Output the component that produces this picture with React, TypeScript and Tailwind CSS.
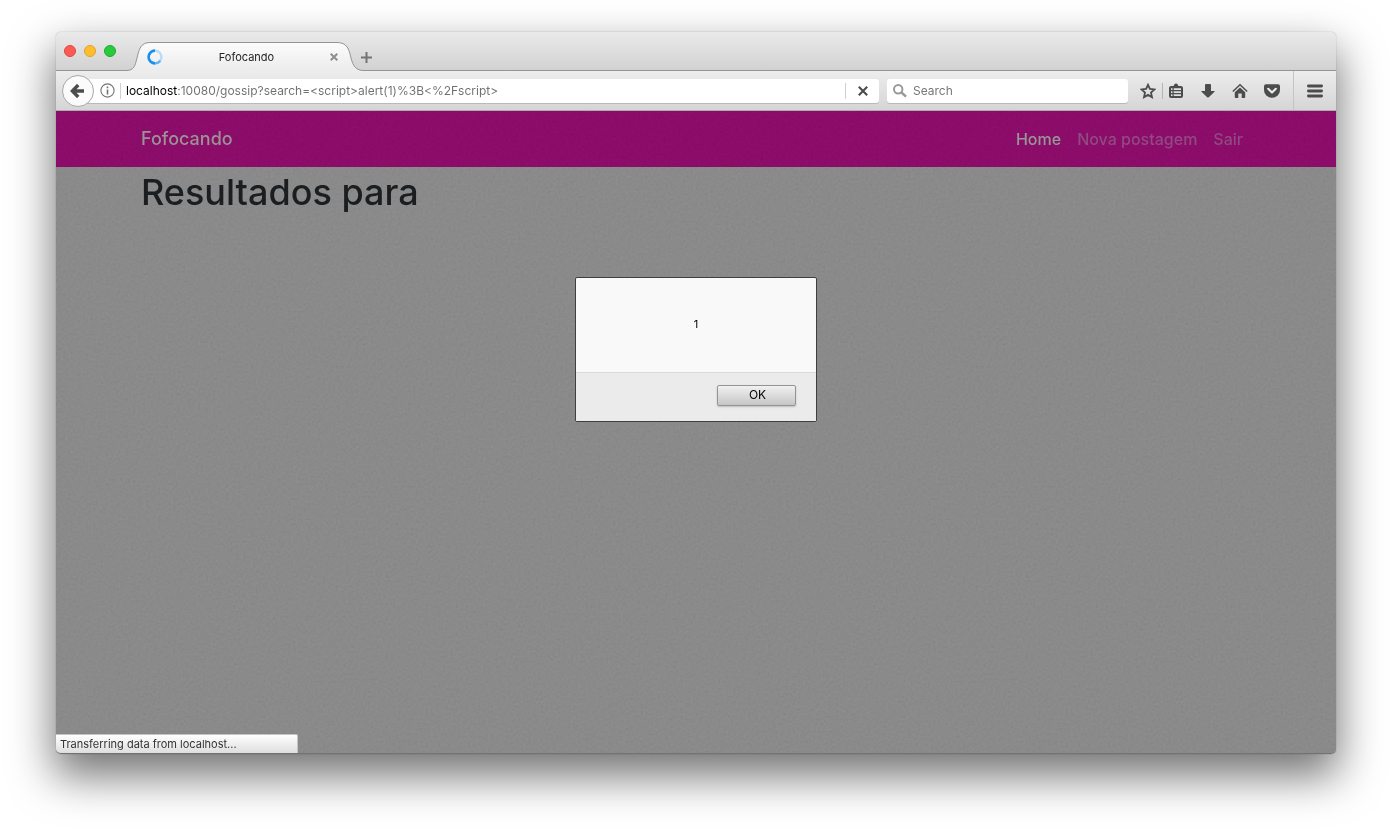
import React from "react";

const iconButton = "flex h-8 w-8 shrink-0 items-center justify-center text-[#4c4c4c]";

function Spinner() {
  return (
    <svg width="16" height="16" viewBox="0 0 16 16" fill="none" aria-hidden="true">
      <circle cx="8" cy="8" r="6.4" stroke="#b9dbf8" strokeWidth="2.4" />
      <path d="M8 14.4A6.4 6.4 0 0 0 13.2 11.6" stroke="#62b1f3" strokeWidth="2.4" />
      <path d="M8 1.6A6.4 6.4 0 0 0 8 14.4" stroke="#1a90ee" strokeWidth="2.6" />
    </svg>
  );
}

function TabStrip() {
  return (
    <header className="flex h-[39px] items-end rounded-t-[5px] border-b border-[#949494] bg-linear-to-b from-[#eaeaea] to-[#d2d2d2] pl-2">
      <div className="flex h-[38px] items-center gap-2">
        <button aria-label="Close window" className="h-3 w-3 rounded-full border border-[#e2463f] bg-[#fc5b53]" />
        <button aria-label="Minimize window" className="h-3 w-3 rounded-full border border-[#e1a325] bg-[#fdbd2f]" />
        <button aria-label="Zoom window" className="h-3 w-3 rounded-full border border-[#1dab2c] bg-[#28cb3e]" />
      </div>
      <div className="relative -mb-px ml-2.5 flex h-[29px] w-[238px] items-center pr-[22px] pl-[21px]">
        <svg className="absolute inset-0" width="238" height="29" viewBox="0 0 238 29" aria-hidden="true">
          <defs>
            <linearGradient id="tab" x1="0" y1="0" x2="0" y2="1">
              <stop offset="0" stopColor="#fcfcfc" />
              <stop offset="1" stopColor="#ebebeb" />
            </linearGradient>
          </defs>
          <path
            d="M0 28.5C8 28.5 9 24 11 16C13 7 15 0.5 24 0.5H211C221 0.5 223 7 225 16C227 24 230 28.5 238 28.5V30H0Z"
            fill="url(#tab)"
          />
          <path
            d="M0 28.5C8 28.5 9 24 11 16C13 7 15 0.5 24 0.5H211C221 0.5 223 7 225 16C227 24 230 28.5 238 28.5"
            fill="none"
            stroke="#949494"
          />
        </svg>
        <div className="relative flex flex-1 items-center">
          <Spinner />
          <span className="flex-1 pl-1 text-center text-[11px] leading-4 text-[#222]">Fofocando</span>
          <button aria-label="Close tab" className="flex h-4 w-4 items-center justify-center">
            <svg width="8" height="8" viewBox="0 0 8 8" stroke="#8f8f8f" strokeWidth="2" aria-hidden="true">
              <path d="M0.7 0.7L7.3 7.3M7.3 0.7L0.7 7.3" />
            </svg>
          </button>
        </div>
      </div>
      <button aria-label="New tab" className="-ml-1 flex h-[25px] w-3 items-center justify-center">
        <svg width="11" height="11" viewBox="0 0 11 11" stroke="#747474" strokeWidth="2" aria-hidden="true">
          <path d="M5.5 0V11M0 5.5H11" />
        </svg>
      </button>
    </header>
  );
}

function Toolbar() {
  return (
    <div className="flex h-10 items-center border-b border-[#aeaeae] bg-linear-to-b from-[#ededed] to-[#d5d5d5] pl-1.5">
      <button
        aria-label="Back"
        className="z-10 flex h-8 w-8 shrink-0 items-center justify-center rounded-full border border-[#a8a8a8] bg-[#fbfbfb] pr-0.5"
      >
        <svg width="14" height="14" viewBox="0 0 14 14" fill="none" stroke="#4c4c4c" strokeWidth="3.4" aria-hidden="true">
          <path d="M8.2 1L2.4 7L8.2 13M2.6 7H14" />
        </svg>
      </button>
      <div className="-ml-2 flex h-6 flex-1 items-center rounded-r-[3px] bg-white pl-[13px] shadow-[0_1px_0_#b9b9b9]">
        <button aria-label="Site information" className="flex h-4 w-4 shrink-0 items-center justify-center">
          <svg width="15" height="15" viewBox="0 0 15 15" fill="none" stroke="#737373" aria-hidden="true">
            <circle cx="7.5" cy="7.5" r="6.6" strokeWidth="1.1" />
            <path d="M7.5 6.4V11.4M7.5 3.6V5.2" strokeWidth="1.6" />
          </svg>
        </button>
        <div className="ml-[5px] flex min-w-0 flex-1 border-x border-[#d0d0d0] pl-[5px]">
          <input
            aria-label="Address"
            readOnly
            value="localhost:10080/gossip?search=<script>alert(1)%3B<%2Fscript>"
            className="h-4 min-w-0 flex-1 bg-[linear-gradient(to_right,#000_52px,#6f6f6f_52px)] bg-clip-text text-[12px] leading-4 text-transparent outline-none"
          />
        </div>
        <button aria-label="Stop loading" className="flex h-6 w-[33px] items-center justify-center">
          <svg width="10" height="10" viewBox="0 0 10 10" stroke="#4c4c4c" strokeWidth="2.1" aria-hidden="true">
            <path d="M0.8 0.8L9.2 9.2M9.2 0.8L0.8 9.2" />
          </svg>
        </button>
      </div>
      <label className="ml-2 flex h-6 w-[241px] items-center gap-[6px] rounded-[3px] bg-white pl-1.5 shadow-[0_1px_0_#b9b9b9]">
        <svg width="14" height="14" viewBox="0 0 14 14" fill="none" stroke="#999" aria-hidden="true">
          <circle cx="5.2" cy="5.2" r="4.2" strokeWidth="2" />
          <path d="M8.4 8.4L13 12.6" strokeWidth="2.6" />
        </svg>
        <input
          aria-label="Search"
          placeholder="Search"
          className="h-4 min-w-0 flex-1 text-[12px] leading-4 outline-none placeholder:text-[#777]"
        />
      </label>
      <div className="ml-1 flex items-center">
        <button aria-label="Bookmark this page" className={iconButton}>
          <svg width="16" height="16" viewBox="0 0 16 16" fill="none" stroke="currentColor" strokeWidth="1.8" strokeLinejoin="miter" aria-hidden="true">
            <path d="M8 1.8L9.9 5.9L14.4 6.4L11 9.6L12 14.2L8 11.9L4 14.2L5 9.6L1.6 6.4L6.1 5.9Z" />
          </svg>
        </button>
        <div className="-ml-0.5 h-4 w-px bg-[#b4b4b4]" />
        <button aria-label="Show bookmarks" className="-ml-[3px] flex h-8 w-8 items-center justify-center text-[#4c4c4c]">
          <svg width="16" height="16" viewBox="0 0 16 16" fill="currentColor" aria-hidden="true">
            <path
              fillRule="evenodd"
              d="M3 3H5.5L6.4 1.2Q8 0 9.6 1.2L10.5 3H13Q15 3 15 5V13Q15 15 13 15H3Q1 15 1 13V5Q1 3 3 3ZM3 5.2V7H4.5V5.2ZM5.7 5.2V7H13V5.2ZM3 8.2V10H4.5V8.2ZM5.7 8.2V10H13V8.2ZM3 11.2V13H4.5V11.2ZM5.7 11.2V13H13V11.2Z"
            />
          </svg>
        </button>
        <button aria-label="Downloads" className={iconButton}>
          <svg width="16" height="16" viewBox="0 0 16 16" fill="currentColor" aria-hidden="true">
            <path d="M5 2Q5 1 6 1H10Q11 1 11 2V8H14.2Q15.2 8 14.5 8.8L8.8 14.2Q8 15 7.2 14.2L1.5 8.8Q0.8 8 1.8 8H5Z" />
          </svg>
        </button>
        <button aria-label="Home page" className={iconButton}>
          <svg width="16" height="16" viewBox="0 0 16 16" aria-hidden="true">
            <path d="M0.8 8.5L8 1.7L15.2 8.5" fill="none" stroke="currentColor" strokeWidth="1.4" />
            <path d="M8 4.4L13.2 9.3V14.2Q13.2 15 12.4 15H9.7V10.4H6.3V15H3.6Q2.8 15 2.8 14.2V9.3Z" fill="currentColor" />
          </svg>
        </button>
        <button aria-label="Save to Pocket" className={iconButton}>
          <svg width="16" height="16" viewBox="0 0 16 16" aria-hidden="true">
            <path d="M2 1.2H14Q16 1.2 16 3.2V7A8 7.8 0 0 1 0 7V3.2Q0 1.2 2 1.2Z" fill="currentColor" />
            <path d="M4.2 5.8L8 9.5L11.8 5.8" fill="none" stroke="#eee" strokeWidth="2.1" strokeLinecap="round" strokeLinejoin="round" />
          </svg>
        </button>
      </div>
      <div className="ml-[5px] flex h-full w-[43px] items-center justify-center border-l border-[#c4c4c4]">
        <button aria-label="Open menu" className={iconButton}>
          <svg width="16" height="14" viewBox="0 0 16 14" fill="currentColor" aria-hidden="true">
            <rect width="16" height="3" rx="1.4" y="0.5" />
            <rect width="16" height="3" rx="1.4" y="5.5" />
            <rect width="16" height="3" rx="1.4" y="10.5" />
          </svg>
        </button>
      </div>
    </div>
  );
}

function Grain() {
  return (
    <svg className="pointer-events-none absolute inset-0 h-full w-full opacity-15 mix-blend-soft-light" aria-hidden="true">
      <filter id="grain" colorInterpolationFilters="sRGB">
        <feTurbulence type="fractalNoise" baseFrequency="0.4" numOctaves="2" />
        <feColorMatrix values="0.5 0.5 0 0 0  0.5 0.5 0 0 0  0.5 0.5 0 0 0  0 0 0 0 1" />
      </filter>
      <rect width="100%" height="100%" filter="url(#grain)" />
    </svg>
  );
}

function Page() {
  return (
    <>
      <nav className="bg-[#8b0c69]">
        <div className="mx-auto flex h-14 max-w-[1140px] items-center justify-between px-[15px]">
          <a href="#" className="text-[18px] leading-[30px] font-medium text-[#9c9298]">Fofocando</a>
          <div className="flex text-[16px] leading-6 font-medium text-[#914a82]">
            <a href="#" className="px-2 text-[#989898]">Home</a>
            <a href="#" className="px-2">Nova postagem</a>
            <a href="#" className="px-2">Sair</a>
          </div>
        </div>
      </nav>
      <main className="mx-auto w-full max-w-[1140px] px-[15px]">
        <h1 className="text-[36px] leading-[50px] font-medium text-[#1b1e20]">Resultados para</h1>
      </main>
    </>
  );
}

function AlertDialog() {
  return (
    <div className="absolute inset-0 flex items-start justify-center pt-[166px]">
      <div role="alertdialog" aria-label="Alert" className="w-[242px] overflow-hidden rounded-xs border border-[#3f3f3f] bg-[#f9f9f9] text-black">
        <p className="flex h-[94px] items-center justify-center pb-0.5 text-[11px] leading-4">1</p>
        <div className="flex h-[49px] items-start justify-end border-t border-[#dadada] bg-[#ebebeb] pt-3 pr-5">
          <button className="flex h-[21px] w-[79px] items-center justify-center rounded-xs border border-[#949494] bg-linear-to-b from-[#f1f1f1] to-[#c6c6c6] pb-px pl-0.5 text-[12px] leading-4 shadow-[0_1px_2px_#0003]">
            OK
          </button>
        </div>
      </div>
    </div>
  );
}

export default function App() {
  return (
    <div className="flex min-h-screen flex-col bg-white px-14 pt-8 pb-[79px] font-[Inter,sans-serif]">
      <div className="flex flex-1 flex-col rounded-[5px] shadow-[0_0_1px_#0008,0_20px_44px_2px_#0000008c]">
        <TabStrip />
        <Toolbar />
        <div className="relative flex flex-1 flex-col overflow-hidden rounded-b-[5px] border-b border-[#727272] bg-[#8a8a8a]">
          <Page />
          <Grain />
          <AlertDialog />
          <div
            role="status"
            className="absolute bottom-0 left-0 h-[19px] w-[242px] rounded-tr-xs border-t border-r border-[#c4c4c4] bg-linear-to-b from-white to-[#dedede] pl-[4px] text-[11px] leading-[18px] text-[#333]"
          >
            Transferring data from localhost...
          </div>
        </div>
      </div>
    </div>
  );
}
